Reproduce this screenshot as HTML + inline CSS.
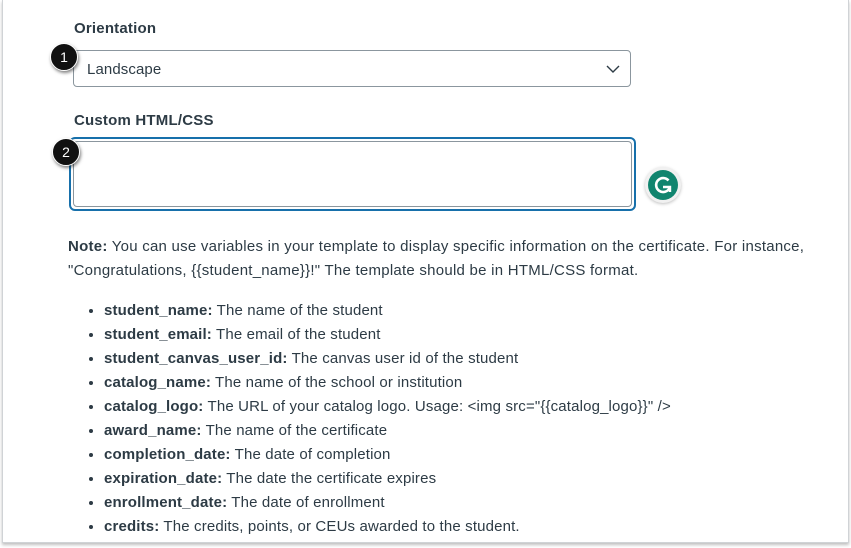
<!DOCTYPE html>
<html><head><meta charset="utf-8"><style>
html,body{margin:0;padding:0;background:#fff;}
body{width:851px;height:548px;position:relative;overflow:hidden;font-family:"Liberation Sans",sans-serif;color:#2d3b45;}
.frame{position:absolute;left:2px;top:0;width:845px;height:542px;border:1px solid #d0d3d6;border-top:none;box-shadow:0 2px 3px rgba(0,0,0,.25);background:#fff;}
.lbl{position:absolute;left:74px;font-weight:bold;font-size:15px;letter-spacing:0.2px;}
.sel{position:absolute;left:73px;top:50px;width:558px;height:37px;border:1px solid #8b969e;border-radius:4px;box-sizing:border-box;}
.sel span{position:absolute;left:13px;top:10px;font-size:15px;letter-spacing:0.1px;}
.ta{position:absolute;left:69px;top:137px;width:567px;height:74px;border:2px solid #1770ab;border-radius:6px;box-sizing:border-box;}
.ta div{position:absolute;left:2px;top:2px;right:2px;bottom:2px;border:1px solid #8b969e;border-radius:4px;}
.badge{position:absolute;width:26px;height:26px;border-radius:50%;background:#111;color:#fff;font-size:14px;text-align:center;line-height:26px;box-shadow:1px 2px 3px rgba(0,0,0,.5);border:1px solid #fff;}
.g{position:absolute;left:645px;top:167px;width:36px;height:36px;border-radius:50%;background:#f1f1f1;box-shadow:0 1px 3px rgba(0,0,0,.25);}
.g div{position:absolute;left:3px;top:3px;width:30px;height:30px;border-radius:50%;background:#11856f;}
.txt{position:absolute;left:68px;font-size:15px;letter-spacing:0.25px;white-space:nowrap;}
ul{position:absolute;left:87px;top:299px;margin:0;padding:0 0 0 17px;font-size:15px;letter-spacing:0.15px;line-height:24px;}
li{white-space:nowrap;}
</style></head><body>
<div class="frame"></div>
<div class="lbl" style="top:20px">Orientation</div>
<div class="sel"><span>Landscape</span>
<svg style="position:absolute;right:10px;top:13px" width="14" height="10" viewBox="0 0 14 10"><path d="M1 2 L7 8 L13 2" fill="none" stroke="#2d3b45" stroke-width="1.4"/></svg></div>
<div class="badge" style="left:50px;top:43px">1</div>
<div class="lbl" style="top:112px">Custom HTML/CSS</div>
<div class="ta"><div></div></div>
<div class="badge" style="left:52px;top:138px">2</div>
<div class="g"><div><svg width="30" height="30" viewBox="0 0 30 30"><path d="M20.5 10.5 A7 7 0 1 0 21.5 18" fill="none" stroke="#fff" stroke-width="2.6"/><path d="M15 17 H22 V22" fill="none" stroke="#fff" stroke-width="2.4"/></svg></div></div>
<div class="txt" style="top:238px"><b>Note:</b> You can use variables in your template to display specific information on the certificate. For instance,</div>
<div class="txt" style="top:262px">"Congratulations, {{student_name}}!" The template should be in HTML/CSS format.</div>
<ul>
<li><b>student_name:</b> The name of the student</li>
<li><b>student_email:</b> The email of the student</li>
<li><b>student_canvas_user_id:</b> The canvas user id of the student</li>
<li><b>catalog_name:</b> The name of the school or institution</li>
<li><b>catalog_logo:</b> The URL of your catalog logo. Usage: &lt;img src="{{catalog_logo}}" /&gt;</li>
<li><b>award_name:</b> The name of the certificate</li>
<li><b>completion_date:</b> The date of completion</li>
<li><b>expiration_date:</b> The date the certificate expires</li>
<li><b>enrollment_date:</b> The date of enrollment</li>
<li><b>credits:</b> The credits, points, or CEUs awarded to the student.</li>
</ul>
</body></html>
